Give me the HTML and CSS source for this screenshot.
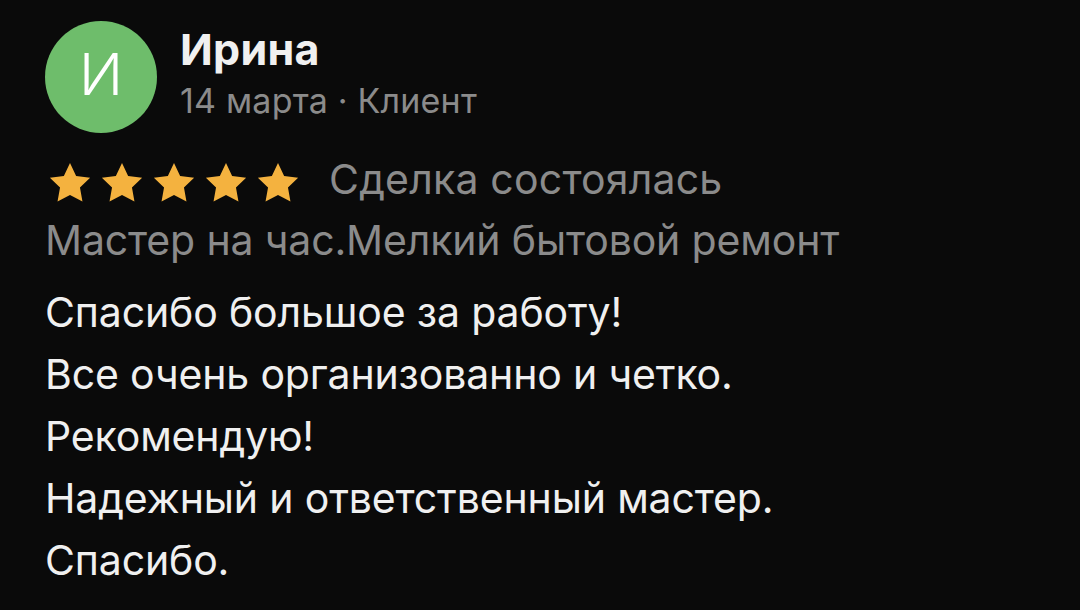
FILE: index.html
```html
<!DOCTYPE html>
<html lang="ru">
<head>
  <meta charset="UTF-8">
  <title>Отзыв</title>
  <link rel="stylesheet" href="styles.css">
</head>
<body>
<div class="review">
  <header class="review-head">
    <div class="avatar">И</div>
    <div class="author">
      <div class="author-name">Ирина</div>
      <div class="author-meta">14 марта · Клиент</div>
    </div>
  </header>

  <div class="rating">
    <div class="stars">
      <svg class="star" viewBox="0 0 24 24"><path d="M12 1.6l3.2 6.7 7.3 1-5.3 5.1 1.3 7.3L12 18.2l-6.5 3.5 1.3-7.3-5.3-5.1 7.3-1z"/></svg>
      <svg class="star" viewBox="0 0 24 24"><path d="M12 1.6l3.2 6.7 7.3 1-5.3 5.1 1.3 7.3L12 18.2l-6.5 3.5 1.3-7.3-5.3-5.1 7.3-1z"/></svg>
      <svg class="star" viewBox="0 0 24 24"><path d="M12 1.6l3.2 6.7 7.3 1-5.3 5.1 1.3 7.3L12 18.2l-6.5 3.5 1.3-7.3-5.3-5.1 7.3-1z"/></svg>
      <svg class="star" viewBox="0 0 24 24"><path d="M12 1.6l3.2 6.7 7.3 1-5.3 5.1 1.3 7.3L12 18.2l-6.5 3.5 1.3-7.3-5.3-5.1 7.3-1z"/></svg>
      <svg class="star" viewBox="0 0 24 24"><path d="M12 1.6l3.2 6.7 7.3 1-5.3 5.1 1.3 7.3L12 18.2l-6.5 3.5 1.3-7.3-5.3-5.1 7.3-1z"/></svg>
    </div>
    <span class="deal">Сделка состоялась</span>
  </div>

  <div class="service">Мастер на час.Мелкий бытовой ремонт</div>

  <div class="review-text">
    <p>Спасибо большое за работу!</p>
    <p>Все очень организованно и четко.</p>
    <p>Рекомендую!</p>
    <p>Надежный и ответственный мастер.</p>
    <p>Спасибо.</p>
  </div>
</div>
</body>
</html>
```

FILE: styles.css
```css
:root {
    --bg: #0a0a0a;
    --text: #f0f0f0;
    --muted: #8b8b8b;
    --green: #6ebd6b;
    --star: #f4b23f;
}

* {
    box-sizing: border-box;
    margin: 0;
    padding: 0;
}

html, body {
    height: 100%;
}

body {
    background: var(--bg);
    color: var(--text);
    font-family: Inter, "Noto Sans", sans-serif;
    overflow: hidden;
}

.review {
    padding: 21px 46px 0 45px;
}

/* avatar + name block */
.review-head {
    display: flex;
    align-items: flex-start;
    gap: 23px;
}

.avatar {
    width: 112px;
    height: 112px;
    border-radius: 50%;
    background: var(--green);
    color: #fff;
    font-size: 58px;
    font-weight: 300;
    padding-bottom: 6px;
    display: flex;
    align-items: center;
    justify-content: center;
    flex-shrink: 0;
}

.author {
    display: flex;
    flex-direction: column;
    gap: 7px;
    margin-top: 3px;
}

.author-name {
    font-size: 43px;
    font-weight: 700;
    letter-spacing: 0.3px;
    line-height: 50px;
}

.author-meta {
    font-size: 34px;
    color: var(--muted);
    letter-spacing: 0.2px;
    line-height: 40px;
}

/* stars row */
.rating {
    display: flex;
    align-items: flex-start;
    margin-top: 22px;
    gap: 28px;
}

.stars {
    display: flex;
    gap: 6px;
    margin-top: 5px;
    padding-left: 2px;
}

.star {
    width: 46px;
    height: 46px;
    fill: var(--star);
}

.deal,
.service {
    font-size: 41px;
    color: var(--muted);
    line-height: 48px;
}

.deal {
    letter-spacing: 0.2px;
}

.service {
    margin-top: 10px;
    letter-spacing: -0.15px;
}

.review-text {
    margin-top: 17px;
    font-size: 41px;
    letter-spacing: -0.15px;
    line-height: 62px;
}
```
